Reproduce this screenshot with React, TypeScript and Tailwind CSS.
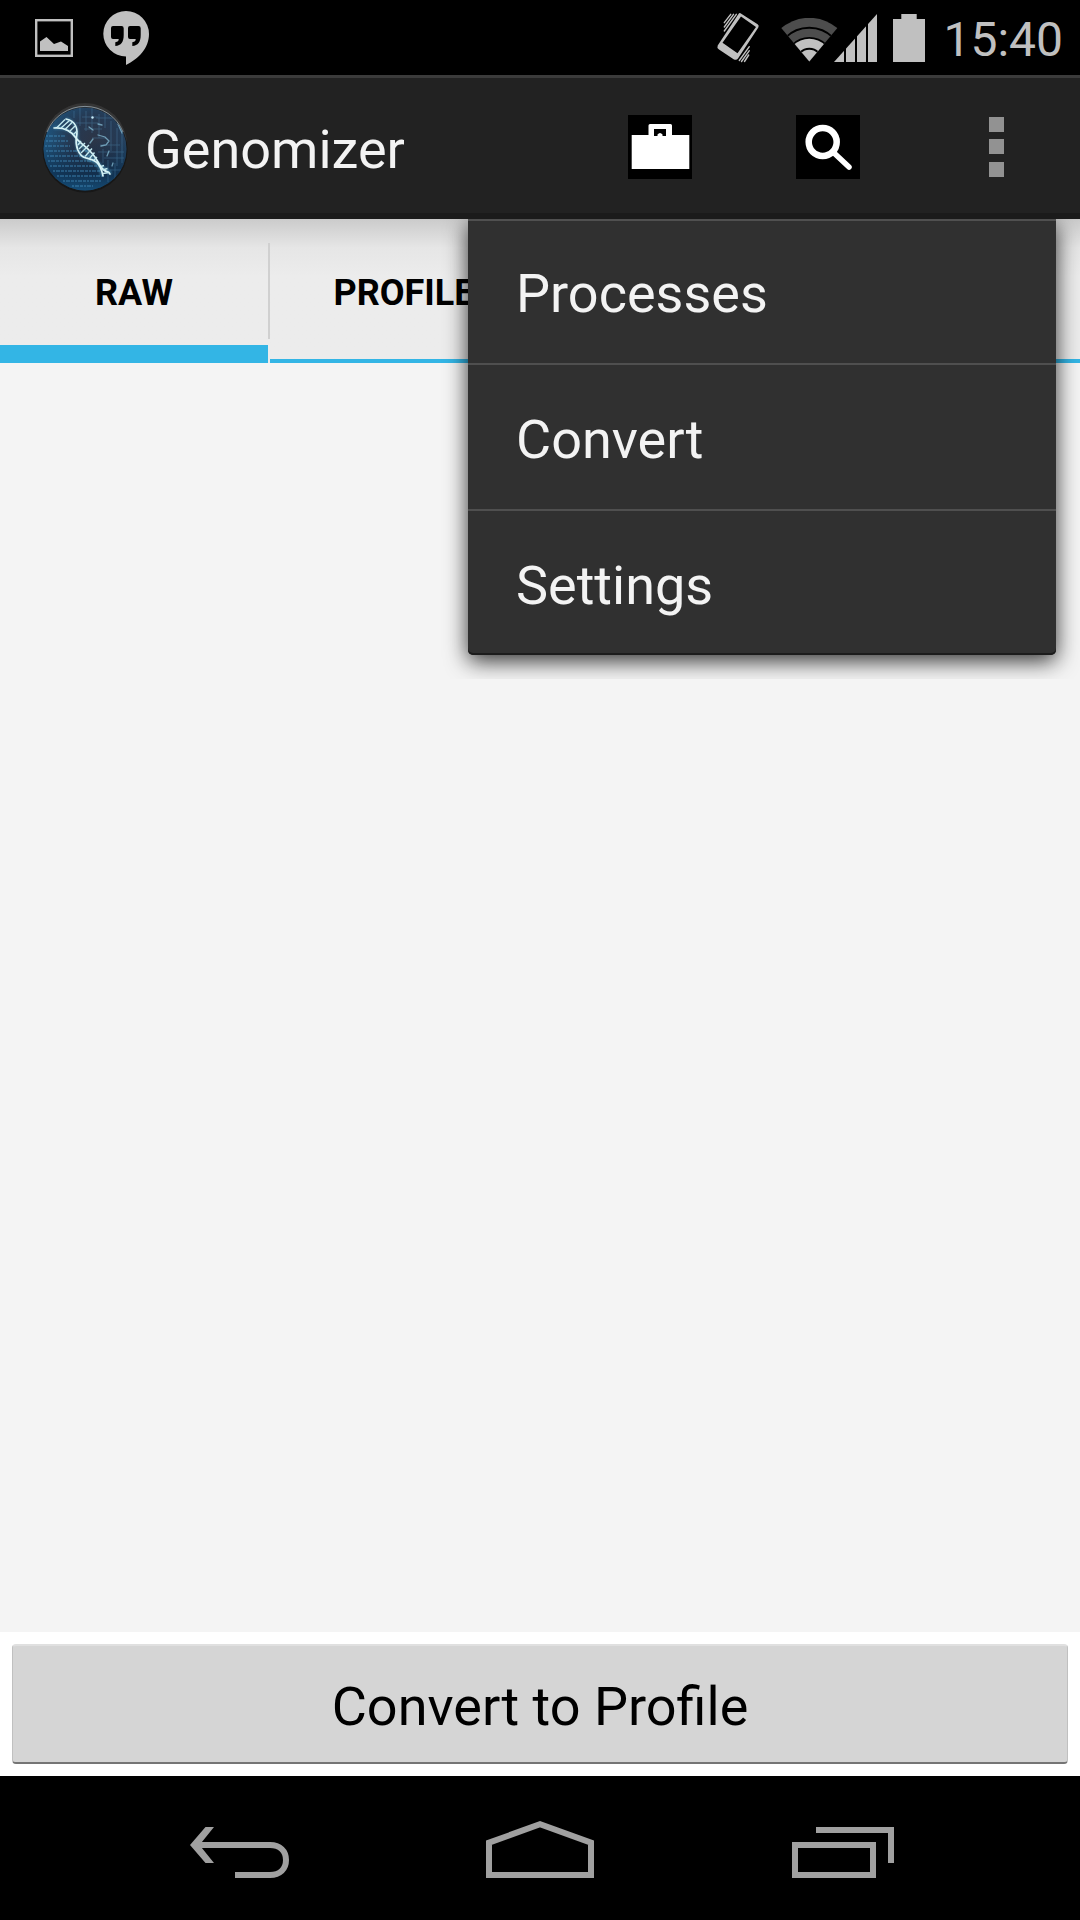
import React from "react";

const SILVER = "#c0c0c0";

function PictureIcon() {
  return (
    <svg width="38" height="38" viewBox="35 19 38 38" aria-hidden="true">
      <rect x="36.2" y="20.2" width="35.6" height="35.6" fill="none" stroke={SILVER} strokeWidth="2.4" />
      <path d="M40 41.5 46.5 37 54 44 61 41.5 68 46v5H40z" fill={SILVER} />
    </svg>
  );
}

function QuoteBubbleIcon() {
  return (
    <svg width="46" height="54" viewBox="103 11 46 54" aria-hidden="true">
      <path
        d="M126 11a23 23 0 0 1 23 23c0 14-10.500 25-23 31v-8.600A22.700 22.700 0 0 1 126 11z"
        fill={SILVER}
      />
      <path
        d="M113 26h8.500a2.200 2.200 0 0 1 2.200 2.200V35c0 7-2.600 10.500-8.400 11v-3.800c2.600-.3 3.400-1.400 3.400-3.200H113a2 2 0 0 1-2-2v-9a2 2 0 0 1 2-2z"
        fill="#000"
      />
      <path
        d="M130 26h8.500a2.200 2.200 0 0 1 2.200 2.200V35c0 7-2.600 10.500-8.400 11v-3.800c2.600-.3 3.400-1.400 3.400-3.200H130a2 2 0 0 1-2-2v-9a2 2 0 0 1 2-2z"
        fill="#000"
      />
    </svg>
  );
}

function VibrateIcon() {
  return (
    <svg width="44" height="52" viewBox="716 12 44 52" aria-hidden="true">
      <path
        fillRule="evenodd"
        fill={SILVER}
        d="M740.5 13.300 757.600 24.300Q759.500 25.500 758.300 27.400L738 58.500Q736.500 60.600 734 59.400L719 49.500Q716.600 47.600 717.700 45.500L738.500 14Q739.400 12.600 740.500 13.300zM741 16.500 722.500 42.700 737.500 53.300 756 27z"
      />
      <g stroke={SILVER} strokeWidth="1.400" strokeLinecap="round">
        <path d="M724.300 22.700 730.700 14.300M724.300 27 733.500 14.300M724.300 31 736.300 14.300" />
        <path d="M739.300 60.500 749.300 46.700M741.500 61.500 749.300 50.700M744.500 61.500 748.700 55" />
      </g>
    </svg>
  );
}

function WifiIcon() {
  return (
    <svg width="58" height="44" viewBox="780 15 58 44" aria-hidden="true">
      <defs>
        <clipPath id="wifi-wedge">
          <path d="M809.300 58.500 770 11.500h78.600z" />
        </clipPath>
      </defs>
      <g clipPath="url(#wifi-wedge)">
        <circle cx="809.300" cy="58.500" r="43.700" fill="#4d4d4d" />
        <circle cx="809.300" cy="58.500" r="33.800" fill="none" stroke="#000" strokeWidth="2" />
        <circle cx="809.300" cy="58.500" r="24.500" fill="#000" />
        <circle cx="809.300" cy="58.500" r="22.700" fill={SILVER} />
        <circle cx="809.300" cy="58.500" r="12.700" fill="none" stroke="#000" strokeWidth="2" />
      </g>
    </svg>
  );
}

function SignalIcon() {
  return (
    <svg width="43" height="48" viewBox="833 12 43 48" aria-hidden="true">
      <path d="M833 60 876 12v48z" fill={SILVER} />
      <path d="M844 12v48M855 12v48M866 12v48" stroke="#000" strokeWidth="2" />
    </svg>
  );
}

function BatteryIcon() {
  return (
    <svg width="32" height="48" viewBox="0 0 32 48" aria-hidden="true">
      <path d="M8.300 0h15.400v5H32v43H0V5h8.300z" fill={SILVER} />
    </svg>
  );
}

function StatusBar() {
  return (
    <header className="flex h-[75px] items-center justify-between bg-black pr-[17px] pl-[35px]">
      <div className="flex items-center gap-[30px]">
        <PictureIcon />
        <QuoteBubbleIcon />
      </div>
      <div className="flex items-center text-[48px] leading-[56px] text-[#c0c0c0]">
        <VibrateIcon />
        <div className="ml-5 flex items-end">
          <WifiIcon />
          <div className="-ml-1">
            <SignalIcon />
          </div>
        </div>
        <div className="ml-4">
          <BatteryIcon />
        </div>
        <time className="ml-[18px] pt-1">15:40</time>
      </div>
    </header>
  );
}

const codeRows = [
  [136, 46, 66], [141, 46, 68], [146, 45, 70], [151, 46, 88], [156, 47, 92],
  [161, 48, 96], [166, 50, 100], [171, 53, 102], [176, 57, 102], [181, 63, 101], [186, 72, 93],
];

function GenomizerLogo() {
  return (
    <svg width="88" height="92" viewBox="41 101 88 92" aria-hidden="true">
      <defs>
        <radialGradient id="globe" cx="0.6" cy="0.38" r="0.66">
          <stop offset="0" stopColor="#2c3547" />
          <stop offset="0.45" stopColor="#253a54" />
          <stop offset="0.75" stopColor="#204c70" />
          <stop offset="1" stopColor="#1c5a88" />
        </radialGradient>
        <linearGradient id="globe-shade" x1="0" y1="0" x2="0" y2="1">
          <stop offset="0.4" stopColor="#0a1c33" stopOpacity="0" />
          <stop offset="0.8" stopColor="#08203c" stopOpacity="0.6" />
          <stop offset="1" stopColor="#0c4068" stopOpacity="0.5" />
        </linearGradient>
        <clipPath id="globe-clip">
          <circle cx="85" cy="149" r="41.500" />
        </clipPath>
        <filter id="glow" x="-20%" y="-20%" width="140%" height="140%">
          <feGaussianBlur stdDeviation="1.300" />
        </filter>
      </defs>
      <circle cx="85" cy="145" r="42" fill="#353535" />
      <circle cx="85" cy="150" r="42.500" fill="#171717" />
      <circle cx="85" cy="149" r="41.500" fill="url(#globe)" />
      <circle cx="85" cy="149" r="41.500" fill="url(#globe-shade)" />
      <g clipPath="url(#globe-clip)">
        {codeRows.map(([y, from, to]) => (
          <path key={y} d={`M${from} ${y}H${to}`} stroke="#3f86b5" strokeWidth="1.600" strokeDasharray="2 1 4 1 3 1" opacity="0.6" />
        ))}
        <g stroke="#5c9cc4" strokeWidth="0.800" opacity="0.4" fill="none">
          <path d="M80 108v18M86 111v20M92 108v25M99 114v24M105 112v16M111 121v30M117 128v38M122 133v30M108 160v22M115 163v17M74 111v7M103 163v-14" />
          <path d="M76 123h22M84 129h18M96 118h20M100 145h20M98 152h26M104 158h20M92 138h14M110 170h12M82 117h16" />
        </g>
        <g stroke="#8cc4dd" strokeWidth="1.300" opacity="0.7" fill="none" strokeLinecap="round">
          <path d="M89 127l4 3M98 124l4 1M98 135l7 2 4 4M101 146l5-1 3-4M109 151l-2 5M90 143l3-4M118 124l4 9M113 163l-1 3" />
        </g>
        <circle cx="92.500" cy="117.500" r="1.200" fill="#c9ecfa" />
        <g fill="none" stroke="#5fb6dc" strokeWidth="3" opacity="0.45" filter="url(#glow)">
          <path d="M54 128C66 127 74 132 77 139S92 156 98 163 108 169 111 174M66 119C76 122 78 130 77 137S77 155 85 158 99 162 102 176" />
        </g>
        <g fill="none" stroke="#d8f3f6" strokeWidth="1.700" strokeLinecap="round">
          <path d="M54 128C66 127 72 132 76 138S91 148 98 162 108 169 110 174" />
          <path d="M66 119C76 121 78 129 76.500 137S78 156 86 158 100 161 103 176" />
        </g>
        <g stroke="#c3e8ef" strokeWidth="1.400">
          <path d="M57 127.500l8-8M61 128l8.500-7.500M65 129.500l7.500-7.500M69 132l6-6M73 135l4-4M78 145l3-4M79 149l6-6M81 153l8-8M85 156.500l7-8M89.500 158.500l5-6M94 160l3-3M101 166.500l3-1M102.500 170l5-1.500M103 173.500l6-1" />
        </g>
      </g>
      <path d="M47 132A41 41 0 0 1 123 132" fill="none" stroke="#b8cbd8" strokeWidth="1" opacity="0.6" />
    </svg>
  );
}

function BriefcaseIcon() {
  return (
    <svg width="64" height="64" viewBox="0 0 64 64" aria-hidden="true">
      <path fill="#000" d="M0 0h64v64H0z" />
      <path
        fill="#fff"
        fillRule="evenodd"
        d="M20.500 20V10.500Q20.500 9 22 9h20.500Q44 9 44 10.500V20h17.300v34H3.700V20zM26 14v7h3.500v-1.500q2.500-3 5 0V21H38v-7z"
      />
    </svg>
  );
}

function MagnifierIcon() {
  return (
    <svg width="64" height="64" viewBox="0 0 64 64" aria-hidden="true">
      <path fill="#000" d="M0 0h64v64H0z" />
      <circle cx="26.700" cy="27" r="14" fill="none" stroke="#fff" strokeWidth="6.500" />
      <path d="M37.500 37.500 53 52" stroke="#fff" strokeWidth="5.500" strokeLinecap="round" />
    </svg>
  );
}

function OverflowIcon() {
  return (
    <svg width="15" height="60" viewBox="0 0 15 60" aria-hidden="true">
      <path fill="#929292" d="M0 0h15v15H0zM0 22h15v15H0zM0 45h15v15H0z" />
    </svg>
  );
}

function ActionBar() {
  return (
    <div className="flex h-[144px] items-stretch border-t-[3px] border-b-[6px] border-t-[#3b3b3b] border-b-[#1b1b1b] bg-[#222222] pt-[3px] pl-[41px]">
      <div className="flex flex-1 items-center gap-4">
        <GenomizerLogo />
        <h1 className="pt-[6px] text-[54px] leading-[64px] text-[#f3f3f3]">Genomizer</h1>
      </div>
      <button type="button" aria-label="Workspace" className="flex w-[168px] items-center justify-center">
        <BriefcaseIcon />
      </button>
      <button type="button" aria-label="Search" className="flex w-[168px] items-center justify-center">
        <MagnifierIcon />
      </button>
      <button type="button" aria-label="More options" aria-expanded="true" className="flex w-[168px] items-center justify-center">
        <OverflowIcon />
      </button>
    </div>
  );
}

function Tabs() {
  return (
    <div
      role="tablist"
      className="flex h-[144px] bg-[#ececec] bg-linear-to-b from-[#cbcbcb] via-[#e6e6e6] via-20% to-[#ececec] to-40% text-[36px] leading-[42px] font-bold text-black"
    >
      <button type="button" role="tab" aria-selected="true" className="w-[268px] border-b-[18px] border-[#33b5e5] pt-[22px]">
        RAW
      </button>
      <div className="my-6 w-[2px] bg-[#d0d0d0]" />
      <button type="button" role="tab" aria-selected="false" className="w-[268px] border-b-4 border-[#33b5e5] pt-2">
        PROFILE
      </button>
      <div className="my-6 w-[2px] bg-[#d0d0d0]" />
      <div className="flex-1 border-b-4 border-[#33b5e5]" />
    </div>
  );
}

const menuItems = ["Processes", "Convert", "Settings"];

function OverflowMenu() {
  return (
    <div className="absolute top-0 right-0 w-[640px] h-[460px] overflow-hidden px-6">
      <div
        role="menu"
        className="ml-1 flex flex-col divide-y-2 divide-[#4f4f4f] rounded-b-[5px] bg-[#303030] shadow-[0_6px_22px_rgba(0,0,0,0.8),inset_0_2px_0_#505050,inset_0_-2px_0_#1c1c1c]"
      >
        {menuItems.map((item) => (
          <button
            key={item}
            type="button"
            role="menuitem"
            className="box-content flex h-[138px] items-center pt-[6px] pl-12 text-left text-[54px] leading-[64px] text-[#f3f3f3]"
          >
            {item}
          </button>
        ))}
      </div>
    </div>
  );
}

function BackIcon() {
  return (
    <svg width="120" height="120" viewBox="180 1788 120 120" aria-hidden="true">
      <path
        d="M235 1875H270C280 1875 286 1869 286 1860S280 1845 270 1845H198"
        fill="none"
        stroke="#a0a0a0"
        strokeWidth="6"
      />
      <path d="M190 1845 205.500 1827H214L199.500 1845 214 1863H205.500z" fill="#a0a0a0" />
    </svg>
  );
}

function HomeIcon() {
  return (
    <svg width="120" height="120" viewBox="480 1788 120 120" aria-hidden="true">
      <path d="M489 1875V1842.600L540 1824.300 591 1842.600V1875z" fill="none" stroke="#a0a0a0" strokeWidth="6" />
    </svg>
  );
}

function RecentsIcon() {
  return (
    <svg width="120" height="120" viewBox="780 1788 120 120" aria-hidden="true">
      <path d="M795 1845h78v30h-78zM816 1830h75v33" fill="none" stroke="#a0a0a0" strokeWidth="6" />
    </svg>
  );
}

function NavigationBar() {
  return (
    <nav className="grid h-[144px] grid-cols-3 bg-black px-[90px]">
      <button type="button" aria-label="Back" className="flex items-center justify-center">
        <BackIcon />
      </button>
      <button type="button" aria-label="Home" className="flex items-center justify-center">
        <HomeIcon />
      </button>
      <button type="button" aria-label="Recent apps" className="flex items-center justify-center">
        <RecentsIcon />
      </button>
    </nav>
  );
}

export default function App() {
  return (
    <div className="flex min-h-screen flex-col bg-[#f4f4f4] font-['Roboto',sans-serif]">
      <StatusBar />
      <ActionBar />
      <main className="relative flex flex-1 flex-col">
        <Tabs />
        <div className="flex-1" />
        <div className="bg-white p-3">
          <button
            type="button"
            className="h-[120px] w-full rounded-[4px] border-x border-t-2 border-b-2 border-x-[#c0c0c0] border-t-[#e0e0e0] border-b-[#757575] bg-[#d5d5d5] pt-[6px] text-[54px] leading-[64px] text-black"
          >
            Convert to Profile
          </button>
        </div>
        <OverflowMenu />
      </main>
      <NavigationBar />
    </div>
  );
}
